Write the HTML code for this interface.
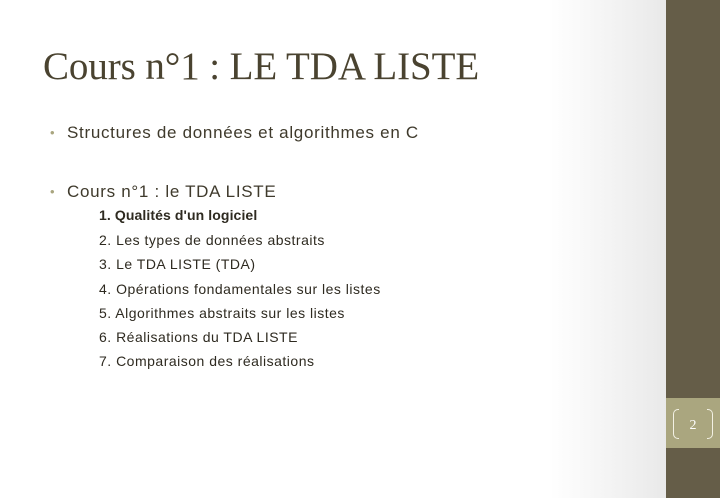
<!DOCTYPE html>
<html style="width:720px;height:498px;overflow:hidden;background:#fff"><head><meta charset="utf-8"><style>
body{margin:0;width:720px;height:498px;overflow:hidden;position:relative;font-family:"Liberation Sans",sans-serif;background:#fff}
.bg{position:absolute;left:0;top:0;width:666px;height:498px;background:linear-gradient(90deg,#fff 0,#fff 550px,#e9e9e9 666px);}
.side{position:absolute;left:666px;top:0;width:54px;height:498px;background:#655d48;}
.num{position:absolute;left:666px;top:398px;width:54px;height:50px;background:#aaa67f;}
.br{position:absolute;top:11px;width:5px;height:28px;border:1.5px solid #f3f1e4;}
h1{position:absolute;left:43px;top:44px;margin:0;font-family:"Liberation Serif",serif;font-weight:normal;font-size:39px;color:#4a4330;letter-spacing:-0.1px}
.b{position:absolute;left:50px;font-size:17px;letter-spacing:0.7px;color:#3f3a2c}
.b:before{content:"•";color:#a9a57f;position:absolute;left:0;font-size:13px;top:2px}
.b span{margin-left:17px}
.s{position:absolute;left:99px;font-size:14px;letter-spacing:0.5px;color:#2e2a20}
</style></head><body>
<div class="bg"></div>
<div class="side"></div>
<div class="num"><div class="br" style="left:7px;border-right:none;border-radius:5px 0 0 5px"></div>
<div style="position:absolute;left:0;width:54px;top:20px;text-align:center;font-family:'Liberation Serif',serif;font-size:14px;color:#fff">2</div>
<div class="br" style="right:7px;border-left:none;border-radius:0 5px 5px 0"></div></div>
<h1>Cours n°1 : LE TDA LISTE</h1>
<div class="b" style="top:123px"><span>Structures de données et algorithmes en C</span></div>
<div class="b" style="top:182px"><span>Cours n°1 : le TDA LISTE</span></div>
<div class="s" style="top:207px;font-weight:bold;letter-spacing:0.1px">1. Qualités d'un logiciel</div>
<div class="s" style="top:232px">2. Les types de données abstraits</div>
<div class="s" style="top:256px">3. Le TDA LISTE (TDA)</div>
<div class="s" style="top:281px">4. Opérations fondamentales sur les listes</div>
<div class="s" style="top:305px">5. Algorithmes abstraits sur les listes</div>
<div class="s" style="top:329px">6. Réalisations du TDA LISTE</div>
<div class="s" style="top:353px">7. Comparaison des réalisations</div>
</body></html>
